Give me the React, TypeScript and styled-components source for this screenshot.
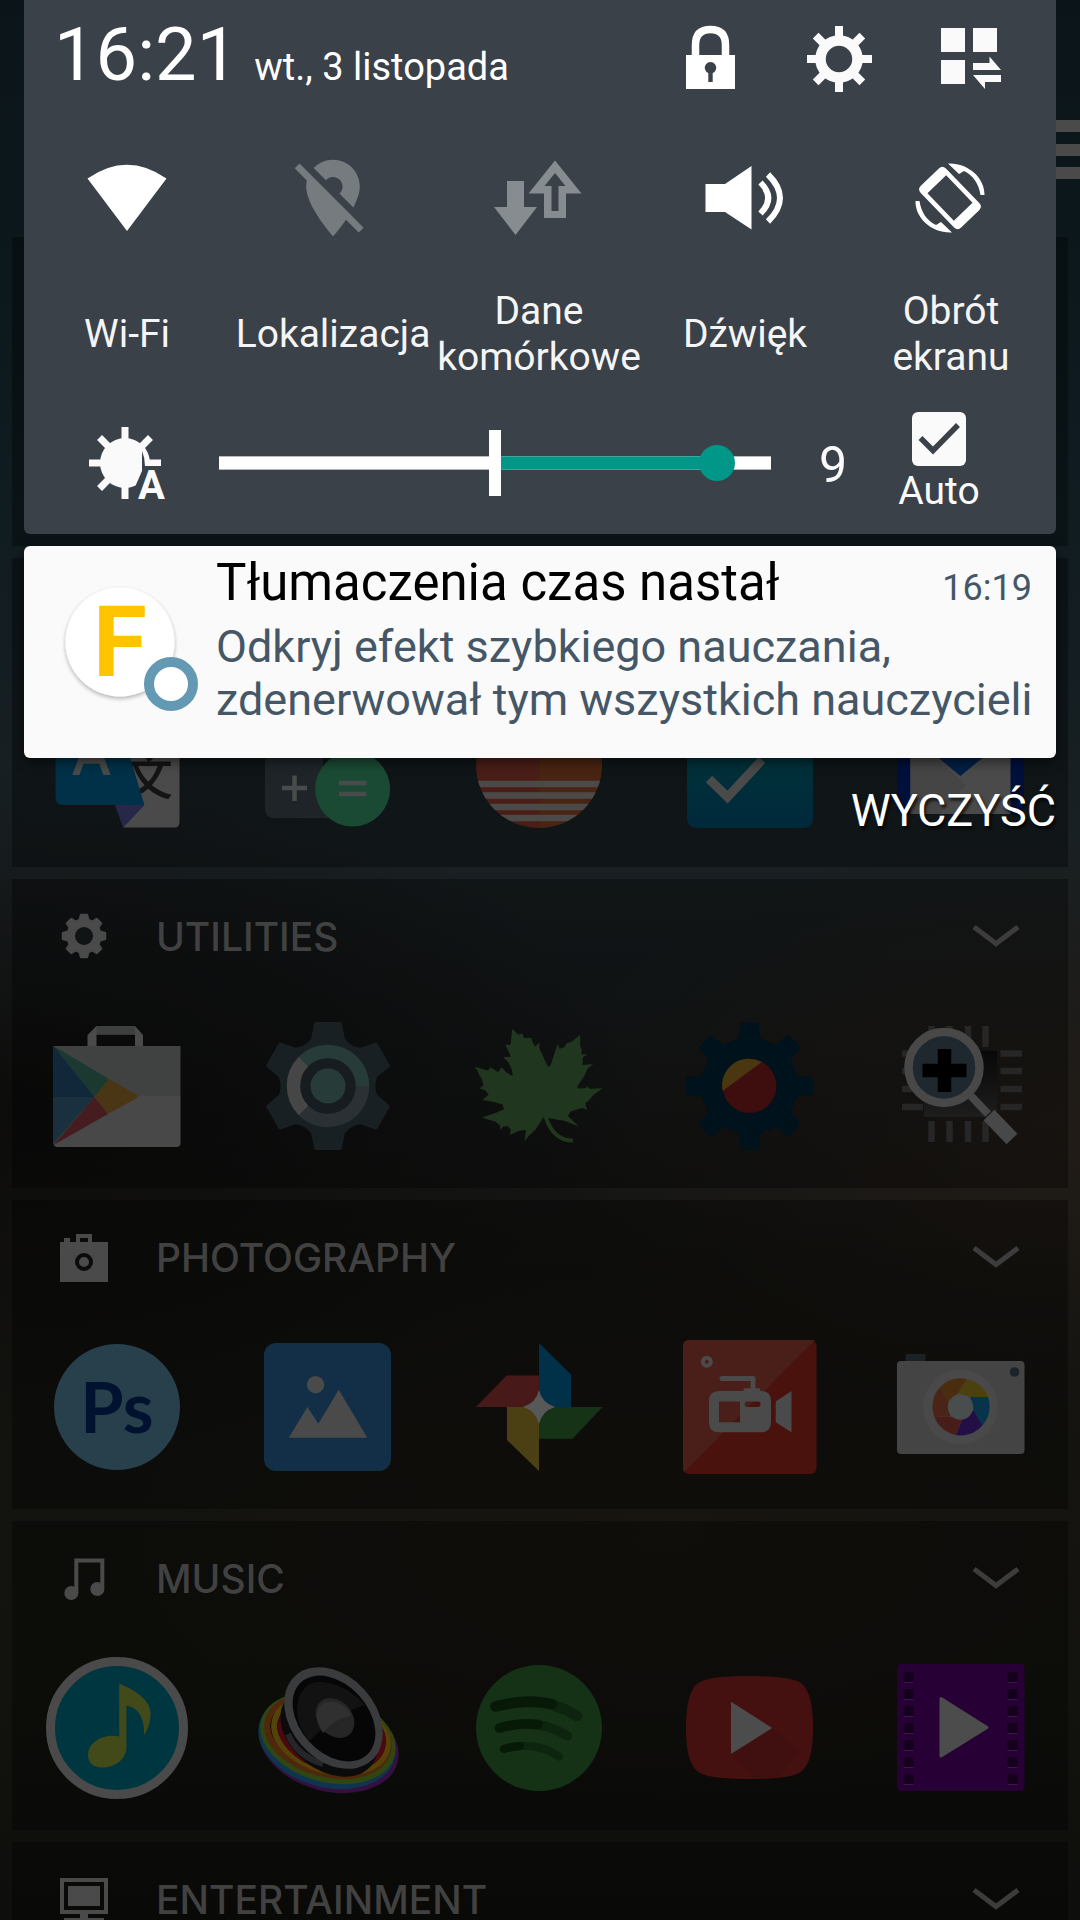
import React from "react";
import styled, { createGlobalStyle } from "styled-components";

const GlobalStyle = createGlobalStyle`
  *, *::before, *::after { box-sizing: border-box; }
  body { margin: 0; background: #0d0d0c; }
  button, input { font: inherit; color: inherit; }
`;

/* ---------- layout ---------- */

const Screen = styled.div`
  position: relative;
  height: 100vh;
  overflow: hidden;
  font-family: Roboto, "Noto Sans", sans-serif;
  background:
    radial-gradient(ellipse 50% 16% at 100% 59%, rgba(34, 28, 23, 0.9) 0%, rgba(34, 28, 23, 0) 100%),
    radial-gradient(ellipse 50% 14% at 62% 80%, rgba(28, 23, 18, 0.6) 0%, rgba(28, 23, 18, 0) 100%),
    radial-gradient(ellipse 60% 18% at 0% 58%, rgba(12, 11, 10, 0.9) 0%, rgba(12, 11, 10, 0) 100%),
    linear-gradient(#0a1419 0%, #0f1b20 24%, #192023 44%, #181b1c 54%, #131310 66%, #12120e 88%, #0e0e0c 100%);
`;

const Launcher = styled.main`
  display: flex;
  flex-direction: column;
  gap: 12px;
  padding: 0 12px;
`;

const LauncherBar = styled.header`
  display: flex;
  align-items: flex-start;
  justify-content: flex-end;
  height: 225px;
  padding-top: 114px;
  margin-right: -12px;
`;

const Drawer = styled.section`
  min-height: 309px;
  background: rgba(0, 0, 0, 0.32);
`;

const DrawerHead = styled.header`
  display: flex;
  align-items: center;
  height: 116px;
  padding: 0 48px;
`;

const DrawerTitle = styled.h2`
  flex: 1;
  margin: 0 0 0 48px;
  font-family: Inter, sans-serif;
  font-size: 39px;
  font-weight: 500;
  line-height: 40px;
  color: #414141;
`;

const PlainButton = styled.button`
  display: flex;
  align-items: center;
  justify-content: center;
  padding: 0;
  border: 0;
  background: none;
  cursor: pointer;
`;

const AppRow = styled.div`
  display: grid;
  grid-template-columns: repeat(5, 1fr);
  padding: 19px 0 30px;
`;

const Shade = styled.div`
  position: absolute;
  inset: 0 0 auto;
  display: flex;
  flex-direction: column;
  padding: 0 24px;
`;

const Panel = styled.section`
  border-radius: 0 0 6px 6px;
  background: #3a4149;
  color: #fafafa;
`;

const PanelHead = styled.header`
  display: flex;
  justify-content: space-between;
  height: 118px;
  padding: 0 20px 0 30px;
`;

const Now = styled.div`
  display: flex;
  align-items: baseline;
  gap: 16px;
  padding-top: 10px;
  color: #fff;
`;

const Clock = styled.time`
  font-size: 74px;
  line-height: 90px;
`;

const Today = styled.time`
  font-size: 38px;
  line-height: 46px;
`;

const HeadActions = styled.nav`
  display: grid;
  grid-template-columns: repeat(3, 130px);
`;

const Tiles = styled.div`
  display: grid;
  grid-template-columns: repeat(5, 1fr);
  padding: 34px 2px 0 0;
`;

const Tile = styled.button`
  display: flex;
  flex-direction: column;
  align-items: center;
  gap: 44px;
  padding: 0;
  border: 0;
  background: none;
  cursor: pointer;
`;

const TileLabel = styled.span`
  display: flex;
  align-items: center;
  min-height: 92px;
  font-size: 39px;
  line-height: 46px;
  color: #f5f5f5;
`;

const Brightness = styled.div`
  display: flex;
  align-items: center;
  height: 154px;
  padding: 12px 73px 0 65px;
`;

const Slider = styled.input`
  flex: 1;
  min-width: 0;
  height: 66px;
  margin: 0 0 0 54px;
  appearance: none;
  background:
    linear-gradient(#fff, #fff) 50% 50% / 12px 100% no-repeat,
    linear-gradient(90deg, #fff 50%, #009688 50%, #009688 90%, #fff 90%) 0 50% / 100% 12px no-repeat,
    linear-gradient(90deg, #b6b9bb 50%, #3ea69d 50%, #3ea69d 90%, #b6b9bb 90%) 0 50% / 100% 14px no-repeat;

  &::-webkit-slider-thumb {
    appearance: none;
    width: 36px;
    height: 36px;
    border-radius: 50%;
    background: #009688;
  }
`;

const Level = styled.output`
  width: 124px;
  padding-top: 4px;
  text-align: center;
  font-size: 50px;
  line-height: 60px;
`;

const AutoLabel = styled.label`
  display: flex;
  flex-direction: column;
  align-items: center;
  gap: 2px;
  width: 88px;
  font-size: 39px;
  line-height: 46px;
`;

const TickBox = styled.span`
  display: grid;
  width: 54px;
  height: 54px;

  & > * { grid-area: 1 / 1; }
  & > svg { pointer-events: none; }
`;

const Tick = styled.input`
  width: 54px;
  height: 54px;
  margin: 0;
  appearance: none;
  border-radius: 6px;
  background: #fafafa;
`;

const Notice = styled.article`
  display: flex;
  align-items: center;
  gap: 14px;
  margin-top: 12px;
  padding: 6px 24px 32px 38px;
  border-radius: 6px;
  background: #fafafa;
  color: #455766;
  box-shadow: 0 4px 12px rgba(0, 0, 0, 0.5);
`;

const NoticeBody = styled.div`
  flex: 1;
  min-width: 0;
`;

const NoticeHead = styled.header`
  display: flex;
  align-items: baseline;
  justify-content: space-between;
`;

const NoticeTitle = styled.h1`
  margin: 0;
  font-size: 51px;
  font-weight: 400;
  line-height: 62px;
  color: #000;
`;

const NoticeTime = styled.time`
  font-size: 36px;
  line-height: 46px;
`;

const NoticeText = styled.p`
  margin: 6px 0 0;
  font-size: 45px;
  line-height: 53px;
  white-space: nowrap;
`;

const ClearButton = styled.button`
  align-self: flex-end;
  margin-top: 26px;
  padding: 0;
  border: 0;
  background: none;
  font-size: 45px;
  line-height: 53px;
  color: #fff;
  text-shadow: 2px 3px 3px rgba(0, 0, 0, 0.7);
  cursor: pointer;
`;

/* ---------- drawing helpers ---------- */

type Pt = [number, number];

const turn = ([x, y]: Pt, deg: number): Pt => {
  const a = (deg * Math.PI) / 180;
  return [x * Math.cos(a) - y * Math.sin(a), x * Math.sin(a) + y * Math.cos(a)];
};

const cog = (teeth: number, half: Pt[]) => {
  const left: Pt[] = half.map(([x, y]) => [-x, y] as Pt).reverse();
  const profile = [...left, ...half];
  const pts: Pt[] = [];
  for (let k = 0; k < teeth; k++) {
    profile.forEach((p) => pts.push(turn(p, (360 / teeth) * k)));
  }
  return "M" + pts.map((p) => p.map((n) => n.toFixed(2)).join(" ")).join("L") + "Z";
};

const AppIcon = ({ name, children }: { name: string; children: React.ReactNode }) => (
  <PlainButton aria-label={name}>
    <svg width="144" height="144" viewBox="0 0 144 144" overflow="visible">
      {children}
    </svg>
  </PlainButton>
);

const TileIcon = ({ children }: { children: React.ReactNode }) => (
  <svg width="92" height="92" viewBox="0 0 92 92">
    {children}
  </svg>
);

const HeadIcon = ({ name, children }: { name: string; children: React.ReactNode }) => (
  <PlainButton aria-label={name}>
    <svg width="68" height="68" viewBox="0 0 68 68" fill="#fafafa">
      {children}
    </svg>
  </PlainButton>
);

const Chevron = () => (
  <svg width="48" height="24" viewBox="0 0 48 24">
    <path d="M2 2L24 18.500L46 2" fill="none" stroke="#3c3c3c" strokeWidth="5" />
  </svg>
);

/* ---------- launcher apps ---------- */

const TranslateIcon = () => (
  <AppIcon name="Translate">
    <path d="M60 20H128Q133.500 20 133.500 26V129Q133.500 134.500 128 134.500H77L98 112L70 20Z" fill="#4a4a4a" />
    <text x="102" y="102" textAnchor="middle" fontSize="50" fontWeight="500" fontFamily="Noto Sans CJK SC, sans-serif" fill="#141414">文</text>
    <path d="M69 112H98.400L77 134.500Z" fill="#27274a" />
    <path d="M9.500 20H70.500L98.400 112H17Q9.500 112 9.500 104Z" fill="#003148" />
    <text x="45.500" y="82" textAnchor="middle" fontSize="58" fontWeight="600" fontFamily="Open Sans, sans-serif" fill="#4a4a4a">A</text>
  </AppIcon>
);

const CalculatorIcon = () => (
  <AppIcon name="Calculator">
    <path d="M8 20H66V125H17Q8 125 8 116Z" fill="#1e2428" />
    <path d="M66 80H84V125H66Z" fill="#1e2428" />
    <path d="M37.500 82.500V108M25 95H50" stroke="#484b4b" strokeWidth="4.500" />
    <circle cx="95.600" cy="96" r="37.500" fill="#1a4a34" />
    <path d="M82 90H109.500M82 101H109.500" stroke="#484b4b" strokeWidth="4.500" />
  </AppIcon>
);

const StripesIcon = () => (
  <AppIcon name="Horizon">
    <clipPath id="stripes"><circle cx="71" cy="72" r="63" /></clipPath>
    <g clipPath="url(#stripes)">
      <path d="M0 0H72V144H0Z" fill="#4a1d17" />
      <path d="M72 0H144V144H72Z" fill="#4a2412" />
      <path d="M0 91H144M0 102.500H144M0 114H144M0 125H144" stroke="#4c4a49" strokeWidth="6.500" />
    </g>
  </AppIcon>
);

const TasksIcon = () => (
  <AppIcon name="Tasks">
    <linearGradient id="tasks" x2="0" y2="1">
      <stop offset="0.4" stopColor="#003138" />
      <stop offset="1" stopColor="#00293c" />
    </linearGradient>
    <rect x="8" y="9" width="126" height="126" rx="9" fill="url(#tasks)" />
    <path d="M30 86L48.500 104L83 67" fill="none" stroke="#4a4a4a" strokeWidth="9" />
  </AppIcon>
);

const MailIcon = () => (
  <AppIcon name="Mail">
    <rect x="7" y="24" width="127" height="97" rx="7" fill="#00103a" />
    <path d="M20.500 24H120.500V121H20.500Z" fill="#4a4a4a" />
    <path d="M20.500 40L76 92L50 121H20.500Z" fill="#454545" />
    <path d="M20.500 42L70.400 83L120.500 42Z" fill="#031f45" />
  </AppIcon>
);

const StoreIcon = () => (
  <AppIcon name="Play Store">
    <path d="M41.500 33V21L50.500 12H89L97 21V33H89V20.500H50.500V33Z" fill="#4a4a4a" />
    <path d="M50.500 12H89V20.500H50.500Z" fill="#3e403f" />
    <path d="M7.500 32H134.500V82H7.500Z" fill="#3f4241" />
    <path d="M7.500 82H134.500V129Q134.500 133 130.500 133H11.500Q7.500 133 7.500 129Z" fill="#484848" />
    <path d="M7.500 32L63 65L48.400 83Z" fill="#1b3831" />
    <path d="M7.500 32L48.400 83L7.500 83Z" fill="#10283a" />
    <path d="M7.500 83H48.400L7.500 130Z" fill="#1a303e" />
    <path d="M63 65L90 80.500Q93.500 82.500 90 84.500L62 100L48.400 83Z" fill="#4a3615" />
    <path d="M48.400 83L62 100L7.500 131Z" fill="#451c20" />
  </AppIcon>
);

const SystemIcon = () => (
  <AppIcon name="Settings">
    <g transform="translate(71 72)">
      <path d={cog(6, [[12, -62], [15, -46], [20, -41]])} fill="#192023" stroke="#192023" strokeWidth="4" strokeLinejoin="round" />
      <circle r="30" fill="#161c1f" />
      <g fill="none" strokeWidth="13.500">
        <path d="M-24.400 -24.400A34.500 34.500 0 0 1 34.500 0" stroke="#273c39" />
        <path d="M34.500 0A34.500 34.500 0 0 1 -24.400 24.400" stroke="#2a3033" />
        <path d="M-24.400 24.400A34.500 34.500 0 0 1 -24.400 -24.400" stroke="#464646" />
      </g>
      <circle r="17.500" fill="#273c39" />
    </g>
  </AppIcon>
);

const LeafIcon = () => (
  <AppIcon name="Leaf">
    <g transform="translate(2 6) scale(0.333)" fill="#20361f">
      <path d="M127 26L145 44L157 40L162 54L184 53L189 70L196 80L209 67L208 84L232 137L236 141L242 136L263 72L269 86L283 82L292 68L304 66L331 44L331 76L336 92L334 103L353 104L339 112L338 135L370 132L354 145L343 168L322 200L324 206L346 205L353 200L360 207L398 204L370 226L358 240L346 250L352 270L337 264L316 270L302 275L294 288L327 320L285 303L221 292L196 330L176 348L164 364L168 330L150 332L120 345L122 328L114 319L100 320L90 330L91 318L78 306L36 293L74 280L102 268L98 254L72 246L37 240L56 224L46 212L29 206L40 196L36 178L28 166L24 156L15 141L54 152L62 142L80 154L86 156L94 142L110 158L128 168L126 150L116 128L100 112L122 110L118 98L106 74L122 74Z" />
      <path d="M227 290Q250 362 309 362" fill="none" stroke="#20361f" strokeWidth="12" />
    </g>
  </AppIcon>
);

const ToolIcon = () => (
  <AppIcon name="Tools">
    <g transform="translate(70.500 72)">
      <path d={cog(8, [[6, -60], [7, -47], [10, -44]])} fill="#00121b" stroke="#00121b" strokeWidth="7" strokeLinejoin="round" />
      <circle r="27" fill="#3e0d0d" />
      <path d="M-27 5A27 27 0 0 1 12.400 -24Z" fill="#4a3610" />
    </g>
  </AppIcon>
);

const CpuIcon = () => (
  <AppIcon name="CPU">
    <path d="M41.500 12V33M59.500 12V33M78 12V33M95.500 12V33M41.500 107V128M59.500 107V128M78 107V128M95.500 107V128M12 39.500H33M12 57H33M12 75H33M12 93H33M110.500 39.500H132M110.500 57H132M110.500 75H132M110.500 93H132" stroke="#262626" strokeWidth="6.500" />
    <linearGradient id="chip" x2="0" y2="1">
      <stop offset="0" stopColor="#080808" />
      <stop offset="1" stopColor="#1d1d1d" />
    </linearGradient>
    <path d="M34 37H107V103H34Z" fill="url(#chip)" />
    <circle cx="54" cy="53.500" r="35.500" fill="#1f282e" />
    <circle cx="54" cy="53.500" r="35.500" fill="none" stroke="#484848" strokeWidth="8.500" />
    <path d="M54.500 35V78M32.500 56.500H76.500" stroke="#000" strokeWidth="13.500" />
    <path d="M81 82L98 100" stroke="#484848" strokeWidth="8" />
    <path d="M99 101L122 125" stroke="#484848" strokeWidth="15" />
  </AppIcon>
);

const PsIcon = () => (
  <AppIcon name="Photoshop">
    <circle cx="71" cy="72" r="63" fill="#27404b" />
    <text x="71" y="98" textAnchor="middle" fontSize="70" fontWeight="700" fontFamily="Lato, sans-serif" fill="#00122f">Ps</text>
  </AppIcon>
);

const GalleryIcon = () => (
  <AppIcon name="Gallery">
    <rect x="7" y="8" width="127" height="128" rx="12" fill="#132f47" />
    <circle cx="58.600" cy="49.700" r="8.700" fill="#4a4a4a" />
    <path d="M31.800 102.700L50.400 72L61.400 88.700L81.700 54.700L110.300 102.700Z" fill="#4a4a4a" />
  </AppIcon>
);

const PhotosIcon = () => (
  <AppIcon name="Photos">
    <path d="M71 8L103 39.500V72H71Z" fill="#003148" />
    <path d="M134.500 72L104.500 103.700H71V72Z" fill="#173317" />
    <path d="M71 136L39 105V72H71Z" fill="#4a4014" />
    <path d="M8 72L38.500 40.500H71V72Z" fill="#481919" />
    <path d="M71 55Q74 68 87 72Q74 76 71 89Q68 76 55 72Q68 68 71 55Z" fill="#585858" />
  </AppIcon>
);

const RecorderIcon = () => (
  <AppIcon name="Screen recorder">
    <rect x="4" y="5" width="133.500" height="134" rx="6" fill="#4a120c" />
    <path d="M10 5H136L5 137Q4 135 4 133V11Q4 5 10 5Z" fill="#4a1f1a" />
    <circle cx="27.800" cy="26.700" r="4" fill="none" stroke="#4a4a4a" strokeWidth="4" />
    <path d="M43 43.500H74V56" fill="none" stroke="#4a4a4a" strokeWidth="5" strokeLinecap="round" strokeLinejoin="round" />
    <path d="M64.600 53.300H81V58H64.600Z" fill="#4a4a4a" />
    <path fillRule="evenodd" d="M40 56H82Q92 56 92 66V87.300Q92 97.300 82 97.300H40Q30 97.300 30 87.300V66Q30 56 40 56ZM40 66.600V87.300H61V66.600ZM68 66.600Q65.700 66.600 65.700 69.300T68 72H79Q81.500 72 81.500 69.300T79 66.600Z" fill="#4a4a4a" />
    <path d="M96.700 66.600L112.500 56V97.300L96.700 87.300Z" fill="#4a4a4a" />
  </AppIcon>
);

const CameraIcon = () => (
  <AppIcon name="Camera">
    <path d="M15.600 19H35.600V28H15.600Z" fill="#1a2226" />
    <rect x="7" y="26" width="127.500" height="93" rx="4" fill="#444" />
    <circle cx="124.500" cy="37" r="4.800" fill="#1b2428" />
    <circle cx="70.500" cy="72" r="37.500" fill="#494949" />
    <g transform="translate(70.500 72)">
      <path d="M-12 -4.700L-20.300 -20A29 29 0 0 1 6.200 -28L-3 -13Z" fill="#4a2c0e" />
      <path d="M-3 -13L6.200 -28A29 29 0 0 1 27.500 -10L9.600 -10Z" fill="#4a410f" />
      <path d="M9.600 -10L27.500 -10A29 29 0 0 1 22 18.300L13 3.300Z" fill="#07344a" />
      <path d="M13 3.300L22 18.300A29 29 0 0 1 -4.800 28L2.400 11.300Z" fill="#210f45" />
      <path d="M2.400 11.300L-4.800 28A29 29 0 0 1 -26.200 9.700L-10 9.700Z" fill="#481c18" />
      <path d="M-10 9.700L-26.200 9.700A29 29 0 0 1 -20.300 -20L-12 -4.700Z" fill="#4a2517" />
      <circle r="12.700" fill="#494d4d" />
    </g>
  </AppIcon>
);

const PlayerIcon = () => (
  <AppIcon name="Music player">
    <circle cx="71" cy="72" r="66.500" fill="#00363f" stroke="#4a4a4a" strokeWidth="9" />
    <path d="M73.200 27.500C92 35 104.500 46 104.500 57C104.500 66 102 73 98 79C99 62 92 51 80.400 50V92C80 104 68 111.500 56 111.500C47 111.500 42 106 42 99C42 88 55 77 73.200 80.500Z" fill="#434a1a" />
  </AppIcon>
);

const SpeakerIcon = () => (
  <AppIcon name="Speaker">
    <g fill="none" strokeWidth="6">
      <ellipse cx="72" cy="88" rx="68" ry="44" transform="rotate(15 72 88)" stroke="#34103f" />
      <ellipse cx="70" cy="85" rx="67" ry="43" transform="rotate(15 70 85)" stroke="#0e3450" />
      <ellipse cx="71" cy="82" rx="66" ry="41" transform="rotate(15 71 82)" stroke="#2f4512" />
      <ellipse cx="71" cy="80" rx="62" ry="38" transform="rotate(15 71 80)" stroke="#50270a" />
      <ellipse cx="74" cy="79" rx="58" ry="36" transform="rotate(15 74 79)" stroke="#544308" />
      <ellipse cx="75" cy="78" rx="52" ry="34" transform="rotate(15 75 78)" stroke="#4c0810" />
    </g>
    <ellipse cx="72" cy="76" rx="54" ry="38" transform="rotate(38 72 76)" fill="#0b0b0b" />
    <path d="M31 78Q40 100 66 108" fill="none" stroke="#252628" strokeWidth="6" />
    <ellipse cx="76.500" cy="62" rx="57" ry="42" transform="rotate(48 76.500 62)" fill="#3a3b3d" />
    <ellipse cx="77" cy="62.500" rx="49" ry="34" transform="rotate(48 77 62.500)" fill="#060606" />
    <path d="M52 85L79 60L108 49C96 34 68 20 52 28C36 40 36 64 52 85Z" fill="#121212" />
    <ellipse cx="78" cy="62" rx="22" ry="17" transform="rotate(48 78 62)" fill="#262626" />
    <path d="M66 77Q56 62 62 51Q70 42 84 48Q92 53 94 60Q78 62 66 77Z" fill="#303030" />
  </AppIcon>
);

const StreamIcon = () => (
  <AppIcon name="Spotify">
    <circle cx="71" cy="72" r="63" fill="#163216" />
    <g fill="none" strokeLinecap="round" stroke="#0d250f">
      <path d="M27.500 50.500Q75 38 109 60" strokeWidth="10.500" />
      <path d="M31.500 72Q70 61 99.500 80" strokeWidth="9.500" />
      <path d="M36 93Q66 84 91 100.500" strokeWidth="8" />
    </g>
    <g fill="none" strokeLinecap="round" stroke="#071a07">
      <path d="M27.500 50.500Q60 42 84 48" strokeWidth="10.500" />
      <path d="M31.500 72Q52 66 70 68.500" strokeWidth="9.500" />
      <path d="M36 93Q44 90.500 52 90" strokeWidth="8" />
    </g>
  </AppIcon>
);

const VideoIcon = () => (
  <AppIcon name="YouTube">
    <path d="M70.500 20C98 20 116 22 123 28C132 36 134 54 134 72S132 107 123 115C116 121 98 123 70.500 123S25 121 18 115C9 107 7 90 7 72S9 36 18 28C25 22 43 20 70.500 20Z" fill="#451010" />
    <path d="M52 98L93.200 72L120 96L98 122L76 123Z" fill="#400f0f" />
    <path d="M52 45.700L93.200 72L52 98Z" fill="#4c4c4c" />
  </AppIcon>
);

const MovieIcon = () => (
  <AppIcon name="Movies">
    <rect x="7" y="8" width="127.500" height="127" rx="4" fill="#270036" />
    {[0, 1, 2, 3, 4, 5, 6].map((n) => (
      <g key={n} transform={`translate(0 ${16 + n * 17})`}>
        <path d="M13.500 10.500H23.500M117.500 10.500H127.500" stroke="#3a174a" strokeWidth="1" />
        <path d="M13.500 0H23.500V10H13.500ZM117.500 0H127.500V10H117.500Z" fill="#15001e" />
      </g>
    ))}
    <path d="M51 42.500L97 71.500L51 100Z" fill="#4c4c4c" stroke="#4c4c4c" strokeWidth="3" strokeLinejoin="round" />
  </AppIcon>
);

/* ---------- drawer heading icons ---------- */

const HeadingSvg = ({ children }: { children: React.ReactNode }) => (
  <svg width="48" height="48" viewBox="0 0 48 48">
    {children}
  </svg>
);

const UtilitiesGlyph = () => (
  <HeadingSvg>
    <g transform="translate(24 23)">
      <path d={cog(8, [[3, -21], [4, -16.500], [5, -15.500]])} fill="#4a4a4a" stroke="#4a4a4a" strokeWidth="2.500" strokeLinejoin="round" />
      <circle r="9" fill="#101415" />
    </g>
  </HeadingSvg>
);

const PhotographyGlyph = () => (
  <HeadingSvg>
    <path d="M0 8H4V4H10V8H48V48H0Z" fill="#4a4a4a" />
    <path d="M18 9V2H30V9" fill="none" stroke="#4a4a4a" strokeWidth="4" />
    <circle cx="24" cy="28" r="7" fill="none" stroke="#0b0b0a" strokeWidth="4" />
  </HeadingSvg>
);

const MusicGlyph = () => (
  <HeadingSvg>
    <path d="M16.300 38V5.500H42.300V34" fill="none" stroke="#4a4a4a" strokeWidth="4" />
    <circle cx="11.300" cy="38" r="7" fill="#4a4a4a" />
    <circle cx="37.300" cy="34" r="7" fill="#4a4a4a" />
  </HeadingSvg>
);

const EntertainmentGlyph = () => (
  <HeadingSvg>
    <path d="M2 4H46V36H2Z" fill="none" stroke="#4a4a4a" strokeWidth="4" />
    <path d="M8 10H40V30H8ZM20 37H28V42H44V48H4V42H20Z" fill="#4a4a4a" />
  </HeadingSvg>
);

type Group = { title?: string; glyph?: React.ReactNode; apps?: React.ReactNode };

const groups: Group[] = [
  {},
  { apps: <><TranslateIcon /><CalculatorIcon /><StripesIcon /><TasksIcon /><MailIcon /></> },
  { title: "UTILITIES", glyph: <UtilitiesGlyph />, apps: <><StoreIcon /><SystemIcon /><LeafIcon /><ToolIcon /><CpuIcon /></> },
  { title: "PHOTOGRAPHY", glyph: <PhotographyGlyph />, apps: <><PsIcon /><GalleryIcon /><PhotosIcon /><RecorderIcon /><CameraIcon /></> },
  { title: "MUSIC", glyph: <MusicGlyph />, apps: <><PlayerIcon /><SpeakerIcon /><StreamIcon /><VideoIcon /><MovieIcon /></> },
  { title: "ENTERTAINMENT", glyph: <EntertainmentGlyph /> },
];

/* ---------- quick tiles ---------- */

const tiles = [
  {
    label: ["Wi-Fi"],
    icon: <path d="M6.500 26.500Q46 -1 85.500 26.500L46 79Z" fill="#fff" />,
  },
  {
    label: ["Lokalizacja"],
    icon: (
      <g transform="scale(3.833)" fill="#757b7f">
        <path d="M12 6.500c1.380 0 2.500 1.120 2.500 2.500 0 .74-.33 1.390-.83 1.850l3.630 3.630c.98-1.860 1.700-3.800 1.700-5.480 0-3.870-3.130-7-7-7-1.980 0-3.760.83-5.040 2.150l3.190 3.190c.46-.52 1.110-.84 1.850-.84zm4.370 9.600l-4.630-4.630-.11-.11L3.270 3 2 4.270l3.180 3.180C5.070 7.950 5 8.470 5 9c0 5.250 7 13 7 13s1.670-1.850 3.380-4.350L18.730 21 20 19.730l-3.630-3.630z" />
      </g>
    ),
  },
  {
    label: ["Dane", "komórkowe"],
    icon: (
      <g fill="#878c90">
        <path d="M14 29H31V55H44L22.500 83L1 55H14Z" />
        <path fillRule="evenodd" d="M62 8.500L88.500 41.500H73V66H51V41.500H35.500ZM62 21L51.500 34H58.500V59H65.500V34H72.500Z" />
      </g>
    ),
  },
  {
    label: ["Dźwięk"],
    icon: (
      <g fill="#fff">
        <path d="M6.500 32H26L52.500 14V77.500L26 60H6.500Z" />
        <path d="M61.500 30.500Q77 46 61.500 61.500M69 22.500Q93 46 69 69.500" fill="none" stroke="#fff" strokeWidth="6" />
      </g>
    ),
  },
  {
    label: ["Obrót", "ekranu"],
    icon: (
      <g transform="translate(45 46)" fill="#fff">
        <path transform="rotate(46)" fillRule="evenodd" d="M-24 -17.500H24Q29 -17.500 29 -12.500V12.500Q29 17.500 24 17.500H-24Q-29 17.500 -29 12.500V-12.500Q-29 -17.500 -24 -17.500ZM-19 -13V13H19V-13Z" />
        {[0, 180].map((a) => (
          <path key={a} transform={`rotate(${a})`} d="M-2 -34.500C18 -35.500 35 -20 34.500 -3H30.500C29 -14 23 -23 14 -27L9 -24Z" />
        ))}
      </g>
    ),
  },
];

export default function App() {
  return (
    <Screen>
      <GlobalStyle />
      <Launcher>
        <LauncherBar>
          <PlainButton aria-label="Menu">
            <svg width="96" height="72" viewBox="0 0 96 72">
              <path d="M0 12H96M0 36H96M0 59H96" stroke="#4a4a4a" strokeWidth="12" />
            </svg>
          </PlainButton>
        </LauncherBar>
        {groups.map((group, i) => (
          <Drawer key={i}>
            <DrawerHead>
              {group.glyph}
              {group.title && (
                <>
                  <DrawerTitle>{group.title}</DrawerTitle>
                  <PlainButton aria-label={group.title}>
                    <Chevron />
                  </PlainButton>
                </>
              )}
            </DrawerHead>
            {group.apps && <AppRow>{group.apps}</AppRow>}
          </Drawer>
        ))}
      </Launcher>

      <Shade>
        <Panel>
          <PanelHead>
            <Now>
              <Clock>16:21</Clock>
              <Today>wt., 3 listopada</Today>
            </Now>
            <HeadActions>
              <HeadIcon name="Blokada">
                <path d="M18.500 34V20Q18.500 4.500 33.500 4.500T48.500 20V34" fill="none" stroke="#fff" strokeWidth="7.500" />
                <path fillRule="evenodd" d="M9 30H58V64H9ZM31.300 48V57H35.700V48A5.700 5.700 0 1 0 31.300 48Z" fill="#fff" />
              </HeadIcon>
              <HeadIcon name="Ustawienia">
                <circle cx="32" cy="34" r="18.500" fill="none" stroke="#fafafa" strokeWidth="10.500" />
                {[0, 45, 90, 135, 180, 225, 270, 315].map((a) => (
                  <path key={a} transform={`rotate(${a} 32 34)`} d="M28 1H36V13H28Z" />
                ))}
              </HeadIcon>
              <HeadIcon name="Edytuj">
                <path d="M4 3H28V27H4ZM36 3H60V27H36ZM4 35H28V59H4ZM36 38H52.500V31.500L64 45H36ZM64 57H48V64L36 50H64Z" />
              </HeadIcon>
            </HeadActions>
          </PanelHead>

          <Tiles>
            {tiles.map((tile) => (
              <Tile key={tile.label[0]}>
                <TileIcon>{tile.icon}</TileIcon>
                <TileLabel>
                  <span>
                    {tile.label[0]}
                    {tile.label[1] && (
                      <>
                        <br />
                        {tile.label[1]}
                      </>
                    )}
                  </span>
                </TileLabel>
              </Tile>
            ))}
          </Tiles>

          <Brightness>
            <svg width="76" height="72" viewBox="0 0 76 72" fill="#fafafa">
              <circle cx="36" cy="36" r="25" />
              {[0, 45, 90, 180, 225, 270, 315].map((a) => (
                <path key={a} transform={`rotate(${a} 36 36)`} d="M32.500 0H39.500V14H32.500Z" />
              ))}
              <path d="M53 24V44L46 60L44 72H76V39H56Q56 31 53 24Z" fill="#3a4149" />
              <text x="62.500" y="72" textAnchor="middle" fontSize="40" fontWeight="700" fontFamily="Roboto, sans-serif">A</text>
            </svg>
            <Slider type="range" min="0" max="100" defaultValue="93" aria-label="Jasność" />
            <Level>9</Level>
            <AutoLabel>
              <TickBox>
                <Tick type="checkbox" defaultChecked />
                <svg width="54" height="54" viewBox="0 0 54 54">
                  <path d="M8.500 26L21 38.500L46 13" fill="none" stroke="#3a4149" strokeWidth="5.500" />
                </svg>
              </TickBox>
              Auto
            </AutoLabel>
          </Brightness>
        </Panel>

        <Notice>
          <svg width="140" height="146" viewBox="0 0 140 146">
            <defs>
              <filter id="lift" x="-20%" y="-20%" width="140%" height="140%">
                <feDropShadow dx="0" dy="2" stdDeviation="2" floodOpacity="0.3" />
              </filter>
            </defs>
            <circle cx="58" cy="76" r="54.500" fill="#fff" filter="url(#lift)" />
            <text x="31" y="110" fontSize="98" fontWeight="700" fontFamily="Roboto, sans-serif" fill="#ffc400">F</text>
            <circle cx="109" cy="118" r="22" fill="#fff" stroke="#6499b3" strokeWidth="10" />
          </svg>
          <NoticeBody>
            <NoticeHead>
              <NoticeTitle>Tłumaczenia czas nastał</NoticeTitle>
              <NoticeTime>16:19</NoticeTime>
            </NoticeHead>
            <NoticeText>
              Odkryj efekt szybkiego nauczania,
              <br />
              zdenerwował tym wszystkich nauczycieli
            </NoticeText>
          </NoticeBody>
        </Notice>

        <ClearButton>WYCZYŚĆ</ClearButton>
      </Shade>
    </Screen>
  );
}
